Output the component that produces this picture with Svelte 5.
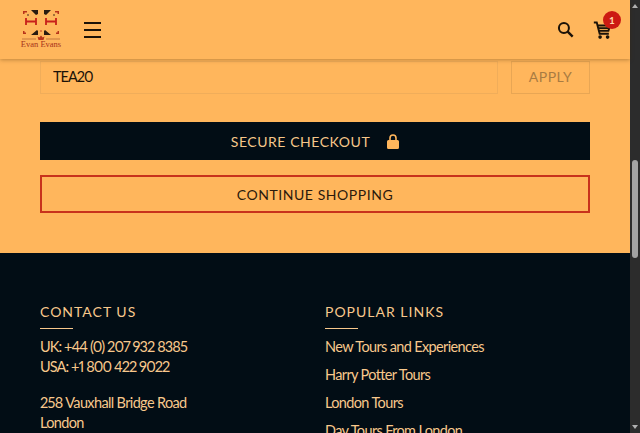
<script lang="ts">
  const popular = [
    'New Tours and Experiences',
    'Harry Potter Tours',
    'London Tours',
    'Day Tours From London'
  ];
</script>

<div class="viewport">
  <div class="page">
    <header class="topbar">
      <div class="brand">
        <svg class="logo" width="40" height="30" viewBox="0 0 40 30" fill="none">
          <!-- corner flecks -->
          <path d="M2 1h4v1.500H3.500V4H2zM38 1h-4v1.500h2.500V4H38zM2 24h3v-1.500H3.500V21H2zM38 24h-3v-1.500h1.500V21H38z" fill="#b8341a"/>
          <circle cx="7" cy="5" r="0.800" fill="#2a1c10"/>
          <circle cx="33" cy="5" r="0.800" fill="#2a1c10"/>
          <circle cx="20" cy="21" r="0.800" fill="#b8341a"/>
          <!-- dark wedges -->
          <path d="M10 0h7v4l-2 1zM30 0h-7v4l2 1zM10 25l6-5 1 1v4zM30 25l-6-5-1 1v4z" fill="#2a1c10"/>
          <!-- the two H marks -->
          <path d="M5 8v7M15 8v7M5 11.500h10M25 8v7M35 8v7M25 11.500h10" stroke="#c8201a" stroke-width="1.800"/>
          <path d="M1 29h14M25 29h14" stroke="#a0522d" stroke-width="0.600"/>
          <path d="M17.500 30h5l1-3.500-1.800 1-1.700-2-1.700 2-1.800-1z" fill="#b8341a"/>
        </svg>
        <span class="logo-name">Evan Evans</span>
      </div>
      <button class="burger" aria-label="Menu"><span></span><span></span><span></span></button>
      <div class="actions">
        <svg width="20" height="20" viewBox="0 0 24 24" fill="none" stroke="#1b1208">
          <circle cx="9.500" cy="9.500" r="6" stroke-width="2.400"/>
          <path d="M14 14l6 6" stroke-width="2.800"/>
        </svg>
        <div class="cart">
          <svg width="20" height="20" viewBox="0 0 24 24" fill="none" stroke="#1b1208" stroke-width="2.300">
            <path d="M1 3h3.500L8 16.500h11"/>
            <path d="M5 6.500h15.500l-2 6.500H7"/>
            <path d="M6 9.800h13.500"/>
            <circle cx="8.500" cy="20.500" r="2.200" fill="#1b1208" stroke="none"/>
            <circle cx="17.500" cy="20.500" r="2.200" fill="#1b1208" stroke="none"/>
          </svg>
          <span class="badge">1</span>
        </div>
      </div>
    </header>

    <main class="basket">
      <div class="promo">
        <input class="promo-input" value="TEA20" readonly />
        <button class="apply">APPLY</button>
      </div>
      <button class="checkout">
        <span>SECURE CHECKOUT</span>
        <svg width="12" height="15" viewBox="0 0 12 15" fill="#ffb65c">
          <path d="M1.500 6h9A1.500 1.500 0 0 1 12 7.500v6a1.500 1.500 0 0 1-1.500 1.500h-9A1.500 1.500 0 0 1 0 13.500v-6A1.500 1.500 0 0 1 1.500 6z"/>
          <path d="M3 7V4a3 3 0 0 1 6 0v3" fill="none" stroke="#ffb65c" stroke-width="1.600"/>
        </svg>
      </button>
      <button class="continue">CONTINUE SHOPPING</button>
    </main>

    <footer class="footer">
      <section>
        <h3>CONTACT US</h3>
        <p class="tel">UK: +44 (0) 207 932 8385</p>
        <p class="tel">USA: +1 800 422 9022</p>
        <p class="addr">258 Vauxhall Bridge Road</p>
        <p>London</p>
      </section>
      <section>
        <h3>POPULAR LINKS</h3>
        <ul>
          {#each popular as link}
            <li>{link}</li>
          {/each}
        </ul>
      </section>
    </footer>
  </div>

  <div class="scrollbar">
    <span class="arrow up"></span>
    <span class="thumb"></span>
    <span class="arrow down"></span>
  </div>
</div>

<style>
  :global(body) {
    margin: 0;
    overflow: hidden;
  }

  .viewport {
    width: 640px;
    height: 433px;
    display: flex;
    overflow: hidden;
    font-family: Lato, "Liberation Sans", sans-serif;
  }

  .page {
    width: 630px;
    flex-shrink: 0;
    background: #ffb65c;
    display: flex;
    flex-direction: column;
  }

  .topbar {
    height: 59px;
    flex-shrink: 0;
    display: flex;
    align-items: center;
    padding: 0 17px 0 21px;
    background: #ffb65c;
    box-shadow: 0 1px 4px rgba(70, 40, 0, 0.35);
    position: relative;
    z-index: 2;
  }

  .brand {
    width: 40px;
    display: flex;
    flex-direction: column;
    align-items: center;
  }

  .logo-name {
    font-family: "Liberation Serif", serif;
    font-size: 8.500px;
    line-height: 9px;
    color: #a8321a;
    white-space: nowrap;
  }

  .burger {
    margin-left: 23px;
    width: 17px;
    padding: 0;
    border: none;
    background: none;
    display: flex;
    flex-direction: column;
    gap: 5px;
  }

  .burger span {
    height: 2px;
    background: #1b1208;
  }

  .actions {
    margin-left: auto;
    display: flex;
    align-items: center;
    gap: 17px;
  }

  .cart {
    position: relative;
    height: 20px;
  }

  .badge {
    position: absolute;
    top: -9px;
    right: -8px;
    width: 18px;
    height: 18px;
    border-radius: 50%;
    background: #cc1a12;
    color: #ffd9a8;
    font-size: 10px;
    font-weight: 700;
    line-height: 18px;
    text-align: center;
  }

  .basket {
    padding: 2px 40px 40px;
    display: flex;
    flex-direction: column;
  }

  .promo {
    display: flex;
    justify-content: space-between;
  }

  .promo-input {
    width: 458px;
    height: 33px;
    box-sizing: border-box;
    padding: 0 12px 2px;
    border: 1px solid #f0ad5a;
    background: transparent;
    font-family: inherit;
    font-size: 14.500px;
    letter-spacing: -1px;
    font-variant-numeric: proportional-nums;
    color: #1b1208;
    outline: none;
  }

  .apply {
    width: 79px;
    height: 33px;
    padding: 0 0 2px;
    border: 1px solid #e8a654;
    background: transparent;
    font-family: inherit;
    font-size: 14px;
    letter-spacing: 0.550px;
    color: #a87b42;
  }

  .checkout,
  .continue {
    width: 550px;
    padding: 0;
    font-family: inherit;
    font-size: 14px;
    letter-spacing: 0.550px;
  }

  .checkout {
    height: 38px;
    margin-top: 28px;
    border: none;
    background: #020d15;
    color: #f6c78a;
    display: flex;
    align-items: center;
    justify-content: center;
    gap: 17px;
  }

  .continue {
    height: 38px;
    margin-top: 15px;
    border: 2px solid #c8321c;
    background: transparent;
    color: #2b1a0c;
  }

  .footer {
    flex: 1;
    background: #020d15;
    color: #f8c88c;
    padding: 49px 40px 0;
    display: grid;
    grid-template-columns: 285px 1fr;
  }

  h3 {
    margin: 0 0 8px;
    padding-bottom: 7px;
    position: relative;
    font-size: 14px;
    font-weight: 400;
    line-height: 20px;
    letter-spacing: 1px;
  }

  h3::after {
    content: '';
    position: absolute;
    left: 0;
    bottom: 0;
    width: 33px;
    height: 1px;
    background: #f8c88c;
  }

  p,
  ul {
    margin: 0;
    font-size: 14.500px;
    line-height: 20px;
    letter-spacing: -0.640px;
    font-variant-numeric: proportional-nums;
  }

  p.tel {
    letter-spacing: -0.890px;
  }

  .addr {
    margin-top: 16px;
  }

  ul {
    list-style: none;
    padding: 0;
    display: flex;
    flex-direction: column;
    gap: 8px;
  }

  .scrollbar {
    flex: 1;
    background: #2c2c2c;
    position: relative;
  }

  .thumb {
    position: absolute;
    top: 160px;
    left: 2px;
    width: 6px;
    height: 98px;
    border-radius: 3px;
    background: #a3a3a3;
  }

  .arrow {
    position: absolute;
    left: 2px;
    border-left: 3px solid transparent;
    border-right: 3px solid transparent;
  }

  .arrow.up {
    top: 4px;
    border-bottom: 4px solid #b0b0b0;
  }

  .arrow.down {
    bottom: 4px;
    border-top: 4px solid #b0b0b0;
  }
</style>
